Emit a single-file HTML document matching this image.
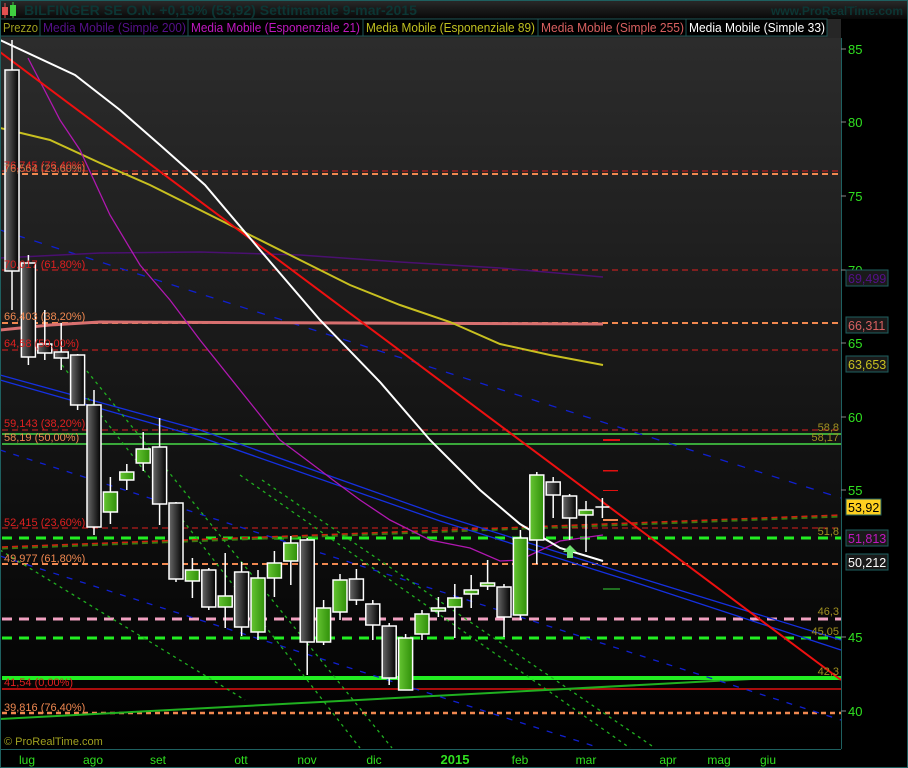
<!DOCTYPE html>
<html><head><meta charset="utf-8"><style>
body{margin:0;width:908px;height:768px;overflow:hidden;background:#000;font-family:"Liberation Sans",sans-serif}
svg{display:block}
</style></head><body>
<svg width="908" height="768" viewBox="0 0 908 768" xmlns="http://www.w3.org/2000/svg" font-family="Liberation Sans, sans-serif">
<defs>
<linearGradient id="bg" x1="0" y1="0" x2="0" y2="1"><stop offset="0" stop-color="#2c2c2c"/><stop offset="0.55" stop-color="#141414"/><stop offset="1" stop-color="#000"/></linearGradient>
<linearGradient id="hd" x1="0" y1="0" x2="0" y2="1"><stop offset="0" stop-color="#2a2a2a"/><stop offset="1" stop-color="#080808"/></linearGradient>
<linearGradient id="bear" x1="0" y1="0" x2="1" y2="0"><stop offset="0" stop-color="#6a6a6a"/><stop offset="1" stop-color="#000"/></linearGradient>
<linearGradient id="bull" x1="0" y1="0" x2="1" y2="0"><stop offset="0" stop-color="#66c533"/><stop offset="1" stop-color="#2f8f08"/></linearGradient>
</defs>
<rect width="908" height="768" fill="#000"/>
<rect x="0" y="0" width="908" height="19" fill="url(#hd)"/>
<rect x="1" y="38" width="840" height="711" fill="url(#bg)"/>
<!-- header -->
<rect x="2" y="7" width="6" height="8" fill="#e05050"/><line x1="5" y1="3" x2="5" y2="18" stroke="#e05050"/>
<rect x="10" y="5" width="6" height="11" fill="#40d040"/><line x1="13" y1="2" x2="13" y2="18" stroke="#40d040"/>
<text x="24" y="15" font-size="14" font-weight="bold" fill="#0c3634" textLength="393" lengthAdjust="spacingAndGlyphs">BILFINGER SE O.N.    +0,19% (53,92)    Settimanale    9-mar-2015</text>
<text x="903" y="15" font-size="12" font-weight="bold" fill="#0c3634" text-anchor="end">www.ProRealTime.com</text>
<!-- legend -->
<rect x="0" y="19" width="908" height="19" fill="#262626"/>
<rect x="0" y="19" width="827" height="17" fill="#000" stroke="#1e5656"/>
<g font-size="12.5">
<text x="3" y="32" fill="#a0a020" textLength="35" lengthAdjust="spacingAndGlyphs">Prezzo</text><line x1="40" y1="19" x2="40" y2="36" stroke="#1e5656"/>
<text x="43" y="32" fill="#55108a" textLength="143" lengthAdjust="spacingAndGlyphs">Media Mobile (Simple 200)</text><line x1="188" y1="19" x2="188" y2="36" stroke="#1e5656"/>
<text x="191" y="32" fill="#c018c0" textLength="169" lengthAdjust="spacingAndGlyphs">Media Mobile (Esponenziale 21)</text><line x1="363" y1="19" x2="363" y2="36" stroke="#1e5656"/>
<text x="366" y="32" fill="#c0c020" textLength="169" lengthAdjust="spacingAndGlyphs">Media Mobile (Esponenziale 89)</text><line x1="538" y1="19" x2="538" y2="36" stroke="#1e5656"/>
<text x="541" y="32" fill="#d86060" textLength="143" lengthAdjust="spacingAndGlyphs">Media Mobile (Simple 255)</text><line x1="686" y1="19" x2="686" y2="36" stroke="#1e5656"/>
<text x="689" y="32" fill="#fff" textLength="136" lengthAdjust="spacingAndGlyphs">Media Mobile (Simple 33)</text>
</g>
<rect x="841" y="19" width="67" height="19" fill="#000"/>
<!-- horizontal levels -->
<g stroke-dasharray="6,4" fill="none">
<line x1="2" y1="171" x2="841" y2="171" stroke="#e02020" stroke-width="1"/>
<line x1="2" y1="174" x2="841" y2="174" stroke="#f08850" stroke-width="2"/>
<line x1="2" y1="270" x2="841" y2="270" stroke="#e02020"/>
<line x1="2" y1="323" x2="841" y2="323" stroke="#f08850" stroke-width="2"/>
<line x1="2" y1="350" x2="841" y2="350" stroke="#e02020"/>
<line x1="2" y1="430" x2="841" y2="430" stroke="#e02020"/>
<line x1="2" y1="444" x2="841" y2="444" stroke="#f08850" stroke-width="1.5"/>
<line x1="2" y1="528" x2="841" y2="528" stroke="#e02020"/>
<line x1="2" y1="564" x2="841" y2="564" stroke="#f08850" stroke-width="2"/>
<line x1="2" y1="713" x2="841" y2="713" stroke="#f08850" stroke-width="2.5" stroke-dasharray="5,4"/>
</g>
<line x1="2" y1="434" x2="841" y2="434" stroke="#3aa83a" stroke-width="2"/>
<line x1="2" y1="444" x2="841" y2="444" stroke="#3aa83a" stroke-width="2"/>
<line x1="2" y1="538" x2="841" y2="538" stroke="#22ee22" stroke-width="3" stroke-dasharray="10,7"/>
<line x1="2" y1="619" x2="841" y2="619" stroke="#f0a0c0" stroke-width="3" stroke-dasharray="10,7"/>
<line x1="2" y1="638" x2="841" y2="638" stroke="#22ee22" stroke-width="3" stroke-dasharray="10,7"/>
<line x1="2" y1="548" x2="841" y2="516" stroke="#3a7a10" stroke-width="3" stroke-dasharray="6,4"/>
<line x1="2" y1="547" x2="841" y2="515" stroke="#d02010" stroke-width="1.5" stroke-dasharray="6,4"/>
<line x1="2" y1="689" x2="841" y2="689" stroke="#e01010" stroke-width="1.5"/>
<line x1="0" y1="719" x2="790" y2="677" stroke="#20b020" stroke-width="2"/>
<line x1="2" y1="678" x2="841" y2="678" stroke="#22ee22" stroke-width="4"/>
<!-- diagonal -->
<g fill="none" stroke-width="1.3">
<line x1="0" y1="230" x2="841" y2="498" stroke="#1020d0" stroke-dasharray="8,10"/>
<line x1="0" y1="450" x2="841" y2="720" stroke="#1020d0" stroke-dasharray="6,8"/>
<line x1="0" y1="556" x2="600" y2="748" stroke="#1020d0" stroke-dasharray="6,8"/>
<polyline points="0,375 200,430 440,515 640,578 841,640" stroke="#1530e0"/>
<polyline points="0,380 200,437 440,521 640,584 841,650" stroke="#1530e0"/>
<line x1="62" y1="365" x2="360" y2="748" stroke="#20b020" stroke-dasharray="3,4"/>
<line x1="78" y1="360" x2="392" y2="748" stroke="#20b020" stroke-dasharray="3,4"/>
<line x1="240" y1="475" x2="630" y2="748" stroke="#20b020" stroke-dasharray="3,4"/>
<line x1="262" y1="480" x2="655" y2="748" stroke="#20b020" stroke-dasharray="3,4"/>
<line x1="0" y1="550" x2="245" y2="700" stroke="#20b020" stroke-dasharray="3,4"/>
</g>
<!-- MAs -->
<polyline fill="none" stroke="#4a1070" stroke-width="1.5" points="0,258 100,253 200,252 300,255 400,262 500,268 603,277"/>
<polyline fill="none" stroke="#d87070" stroke-width="3" points="0,330 50,325 100,322 603,324"/>
<polyline fill="none" stroke="#c8c020" stroke-width="2" points="0,128 50,140 100,163 150,185 200,210 250,235 300,260 350,285 400,305 450,322 500,344 550,355 603,365"/>
<polyline fill="none" stroke="#b018b0" stroke-width="1.3" points="28,58 60,120 80,150 110,215 140,265 170,300 200,340 240,390 280,440 320,470 333,480 360,500 390,520 430,540 470,548 500,561 520,560 560,541 603,535"/>
<line x1="0" y1="52" x2="841" y2="680" stroke="#ee1010" stroke-width="2"/>
<polyline fill="none" stroke="#fff" stroke-width="2" points="0,40 75,75 120,110 160,145 205,185 260,250 320,320 380,382 430,440 480,490 520,524 560,548 603,561"/>
<!-- candles -->
<g stroke="#fff" stroke-width="1.5">
<line x1="12" y1="40" x2="12" y2="310"/><rect x="5" y="70" width="14" height="201" fill="url(#bear)"/>
<line x1="28.4" y1="255" x2="28.4" y2="365"/><rect x="21.4" y="263" width="14" height="94" fill="url(#bear)"/>
<line x1="44.8" y1="310" x2="44.8" y2="360"/><rect x="37.8" y="344" width="14" height="9" fill="url(#bear)"/>
<line x1="61.2" y1="323" x2="61.2" y2="370"/><rect x="54.2" y="352" width="14" height="6" fill="url(#bear)"/>
<line x1="77.6" y1="354" x2="77.6" y2="410"/><rect x="70.6" y="355" width="14" height="50" fill="url(#bear)"/>
<line x1="94" y1="390" x2="94" y2="535"/><rect x="87" y="405" width="14" height="122" fill="url(#bear)"/>
<line x1="110.4" y1="477" x2="110.4" y2="524"/><rect x="103.4" y="492" width="14" height="20" fill="url(#bull)"/>
<line x1="126.8" y1="464" x2="126.8" y2="490"/><rect x="119.8" y="472" width="14" height="8" fill="url(#bull)"/>
<line x1="143.2" y1="432" x2="143.2" y2="471"/><rect x="136.2" y="449" width="14" height="14" fill="url(#bull)"/>
<line x1="159.6" y1="418" x2="159.6" y2="525"/><rect x="152.6" y="447" width="14" height="57" fill="url(#bear)"/>
<line x1="176" y1="502" x2="176" y2="582"/><rect x="169" y="503" width="14" height="76" fill="url(#bear)"/>
<line x1="192.4" y1="558" x2="192.4" y2="598"/><rect x="185.4" y="570" width="14" height="11" fill="url(#bull)"/>
<line x1="208.8" y1="568" x2="208.8" y2="610"/><rect x="201.8" y="570" width="14" height="37" fill="url(#bear)"/>
<line x1="225.2" y1="553" x2="225.2" y2="628"/><rect x="218.2" y="596" width="14" height="11" fill="url(#bull)"/>
<line x1="241.6" y1="562" x2="241.6" y2="636"/><rect x="234.6" y="572" width="14" height="55" fill="url(#bear)"/>
<line x1="258" y1="570" x2="258" y2="640"/><rect x="251" y="578" width="14" height="54" fill="url(#bull)"/>
<line x1="274.4" y1="551" x2="274.4" y2="597"/><rect x="267.4" y="563" width="14" height="15" fill="url(#bull)"/>
<line x1="290.8" y1="536" x2="290.8" y2="585"/><rect x="283.8" y="543" width="14" height="18" fill="url(#bull)"/>
<line x1="307.2" y1="538" x2="307.2" y2="675"/><rect x="300.2" y="540" width="14" height="102" fill="url(#bear)"/>
<line x1="323.6" y1="600" x2="323.6" y2="645"/><rect x="316.6" y="608" width="14" height="34" fill="url(#bull)"/>
<line x1="340" y1="574" x2="340" y2="620"/><rect x="333" y="580" width="14" height="32" fill="url(#bull)"/>
<line x1="356.4" y1="569" x2="356.4" y2="605"/><rect x="349.4" y="579" width="14" height="21" fill="url(#bear)"/>
<line x1="372.8" y1="600" x2="372.8" y2="640"/><rect x="365.8" y="604" width="14" height="21" fill="url(#bear)"/>
<line x1="389.2" y1="623" x2="389.2" y2="685"/><rect x="382.2" y="626" width="14" height="52" fill="url(#bear)"/>
<line x1="405.6" y1="634" x2="405.6" y2="690"/><rect x="398.6" y="638" width="14" height="52" fill="url(#bull)"/>
<line x1="422" y1="610" x2="422" y2="640"/><rect x="415" y="614" width="14" height="20" fill="url(#bull)"/>
<line x1="438.4" y1="597" x2="438.4" y2="617"/><rect x="431.4" y="608" width="14" height="3" fill="url(#bull)"/>
<line x1="454.8" y1="584" x2="454.8" y2="638"/><rect x="447.8" y="598" width="14" height="9" fill="url(#bull)"/>
<line x1="471.2" y1="575" x2="471.2" y2="608"/><rect x="464.2" y="590" width="14" height="4" fill="url(#bull)"/>
<line x1="487.6" y1="560" x2="487.6" y2="590"/><rect x="480.6" y="583" width="14" height="3" fill="url(#bull)"/>
<line x1="504" y1="584" x2="504" y2="637"/><rect x="497" y="587" width="14" height="30" fill="url(#bear)"/>
<line x1="520.4" y1="530" x2="520.4" y2="620"/><rect x="513.4" y="538" width="14" height="77" fill="url(#bull)"/>
<line x1="536.8" y1="472" x2="536.8" y2="564"/><rect x="529.8" y="475" width="14" height="65" fill="url(#bull)"/>
<line x1="553.2" y1="477" x2="553.2" y2="518"/><rect x="546.2" y="482" width="14" height="13" fill="url(#bear)"/>
<line x1="569.6" y1="494" x2="569.6" y2="540"/><rect x="562.6" y="496" width="14" height="22" fill="url(#bear)"/>
<line x1="586" y1="501" x2="586" y2="552"/><rect x="579" y="510" width="14" height="5" fill="url(#bull)"/>
<line x1="602.4" y1="498" x2="602.4" y2="518"/><line x1="595.4" y1="507" x2="609.4" y2="507"/>
</g>
<!-- small markers -->
<rect x="603" y="439" width="17" height="2" fill="#e01010"/>
<rect x="603" y="470" width="15" height="1.5" fill="#e01010" />
<rect x="603" y="490" width="15" height="1" fill="#e01010"/>
<rect x="603" y="519" width="15" height="2" fill="#f08850"/>
<rect x="603" y="588" width="17" height="2" fill="#207020"/>
<polygon points="570,545 577,552 573,552 573,558 567,558 567,552 563,552" fill="#70e070"/>
<!-- left labels -->
<g font-size="11">
<text x="4" y="169" fill="#e02020">76,745 (76,40%)</text>
<text x="4" y="172" fill="#f08850" opacity="0.8">76,564 (23,60%)</text>
<text x="4" y="268" fill="#e02020">70,017 (61,80%)</text>
<text x="4" y="320" fill="#f08850">66,403 (38,20%)</text>
<text x="4" y="347" fill="#e02020">64,58 (50,00%)</text>
<text x="4" y="427" fill="#e02020">59,143 (38,20%)</text>
<text x="4" y="441" fill="#f08850">58,19 (50,00%)</text>
<text x="4" y="526" fill="#e02020">52,415 (23,60%)</text>
<text x="4" y="562" fill="#f08850">49,977 (61,80%)</text>
<text x="4" y="686" fill="#e02020">41,54 (0,00%)</text>
<text x="4" y="711" fill="#f08850">39,816 (76,40%)</text>
<text x="4" y="745" fill="#a0a020">© ProRealTime.com</text>
<g fill="#a09020" text-anchor="end">
<text x="839" y="431">58,8</text><text x="839" y="441">58,17</text>
<text x="839" y="535">51,8</text><text x="839" y="615">46,3</text>
<text x="839" y="635">45,05</text><text x="839" y="675">42,3</text>
</g>
</g>
<!-- right axis -->
<rect x="841" y="38" width="67" height="712" fill="#000"/>
<line x1="841.5" y1="38" x2="841.5" y2="750" stroke="#1e6060"/>
<g stroke="#888"><line x1="841" y1="49" x2="846" y2="49"/><line x1="841" y1="122" x2="846" y2="122"/><line x1="841" y1="196" x2="846" y2="196"/><line x1="841" y1="270" x2="846" y2="270"/><line x1="841" y1="343" x2="846" y2="343"/><line x1="841" y1="417" x2="846" y2="417"/><line x1="841" y1="490" x2="846" y2="490"/><line x1="841" y1="637" x2="846" y2="637"/><line x1="841" y1="711" x2="846" y2="711"/></g>
<g font-size="13" fill="#30e020">
<text x="848" y="54">85</text><text x="848" y="127">80</text><text x="848" y="201">75</text><text x="848" y="275">70</text><text x="848" y="348">65</text><text x="848" y="422">60</text><text x="848" y="495">55</text><text x="848" y="642">45</text><text x="848" y="716">40</text>
</g>
<g font-size="12.5" stroke="#1e6060">
<rect x="846" y="270" width="42" height="16" fill="#1a1a1a"/><text x="848" y="283" fill="#55108a" stroke="none">69,499</text>
<rect x="846" y="317" width="42" height="16" fill="#1a1a1a"/><text x="848" y="330" fill="#d86060" stroke="none">66,311</text>
<rect x="846" y="356" width="42" height="16" fill="#1a1a1a"/><text x="848" y="369" fill="#c8c020" stroke="none">63,653</text>
<rect x="846" y="499" width="35" height="16" fill="#ffd020"/><text x="848" y="512" fill="#000" stroke="none">53,92</text>
<rect x="846" y="530" width="42" height="16" fill="#1a1a1a"/><text x="848" y="543" fill="#c018c0" stroke="none">51,813</text>
<rect x="846" y="554" width="42" height="16" fill="#1a1a1a"/><text x="848" y="567" fill="#fff" stroke="none">50,212</text>
</g>
<!-- bottom axis -->
<rect x="0" y="749" width="908" height="19" fill="#000"/>
<line x1="0" y1="749.5" x2="841" y2="749.5" stroke="#1e6060"/>
<rect x="0.5" y="0.5" width="907" height="767" fill="none" stroke="#1e6060"/>
<g font-size="12" fill="#30e020" text-anchor="middle">
<text x="27" y="764">lug</text><text x="93" y="764">ago</text><text x="158" y="764">set</text><text x="241" y="764">ott</text><text x="307" y="764">nov</text><text x="374" y="764">dic</text><text x="455" y="764" font-weight="bold" font-size="13">2015</text><text x="520" y="764">feb</text><text x="586" y="764">mar</text><text x="668" y="764">apr</text><text x="719" y="764">mag</text><text x="768" y="764">giu</text>
</g>
</svg>
</body></html>
